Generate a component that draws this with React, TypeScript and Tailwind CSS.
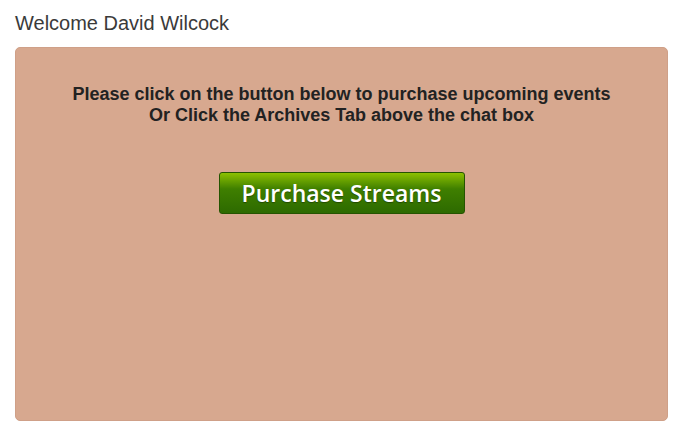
export default function App() {
  return (
    <div className="w-[681px] h-[434px] bg-white pl-[15px] pr-[13px] font-['Liberation_Sans',Arial,sans-serif]">
      <h1 className="pt-[11px] text-[20px] leading-[24px] text-[#3a3a3a]">Welcome David Wilcock</h1>
      <div className="mt-[12px] h-[374px] rounded-[5px] border border-[#cfa088] bg-[#d7a88f] flex flex-col items-center">
        <p className="mt-[36px] text-center text-[18px] leading-[21px] font-bold text-[#222222]">
          Please click on the button below to purchase upcoming events
          <br />
          Or Click the Archives Tab above the chat box
        </p>
        <button className="mt-[46px] w-[246px] h-[42px] rounded-[3px] border border-[#255400] bg-gradient-to-b from-[#8cc100] via-[#3f7f00] via-40% to-[#2d6a00] text-white text-[23px] leading-none font-semibold font-['Open_Sans','DejaVu_Sans',sans-serif] [text-shadow:0_1px_1px_rgba(0,0,0,0.35)]">
          Purchase Streams
        </button>
      </div>
    </div>
  );
}
